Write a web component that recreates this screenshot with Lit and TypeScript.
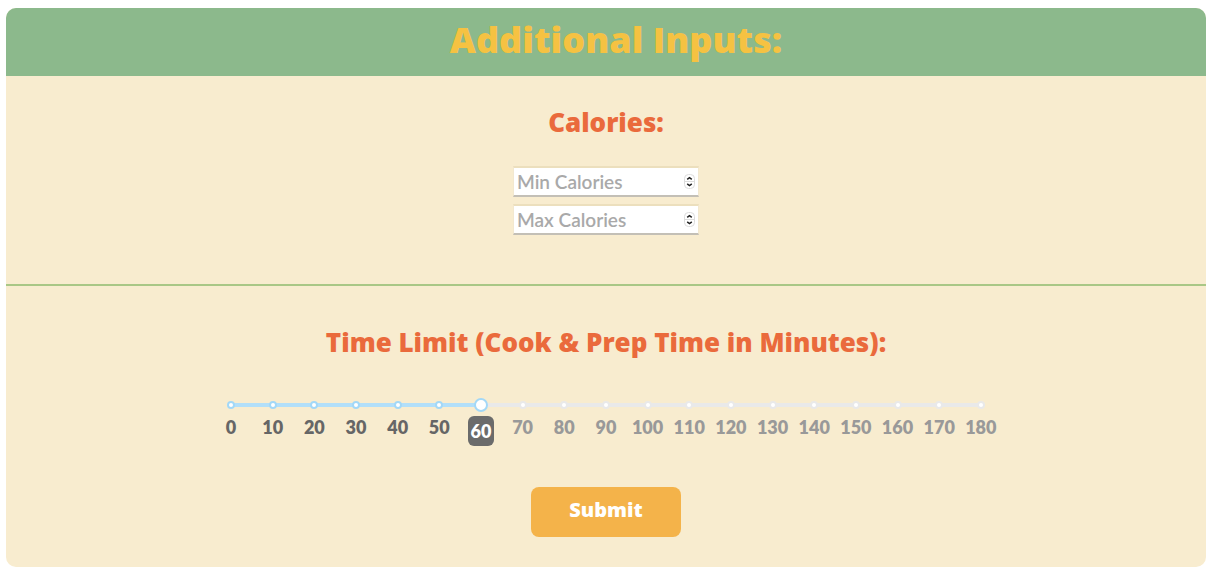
import { LitElement, html, css } from "lit";
import { customElement, property, state } from "lit/decorators.js";
import { classMap } from "lit/directives/class-map.js";

@customElement("calorie-field")
class CalorieField extends LitElement {
  @property() label = "";

  static styles = css`
    :host {
      display: block;
    }
    .field {
      display: grid;
      align-items: center;
    }
    .input,
    .stepper {
      grid-area: 1 / 1;
    }
    .input {
      box-sizing: border-box;
      width: 100%;
      height: 31px;
      margin: 0;
      padding: 0 20px 0 3px;
      background: #fff;
      background-clip: padding-box;
      border: 1px solid #f2e8d0;
      border-top: 2px solid #ecdfbd;
      border-bottom: 2px solid #c3bfb6;
      border-radius: 0;
      outline: none;
      color: #555;
      font: 600 19px/24px Lato, "Liberation Sans", sans-serif;
      appearance: textfield;
    }
    .input::-webkit-inner-spin-button {
      appearance: none;
      margin: 0;
    }
    .input::placeholder {
      color: #a9a9a9;
      opacity: 1;
    }
    .stepper {
      justify-self: end;
      margin-right: 4px;
      pointer-events: none;
    }
  `;

  render() {
    return html`
      <div class="field">
        <input class="input" type="number" min="0" placeholder=${this.label} aria-label=${this.label} />
        <svg class="stepper" width="11" height="15" viewBox="0 0 11 15" fill="none" aria-hidden="true">
          <rect x="0.5" y="0.5" width="10" height="14" rx="4" fill="#fff" stroke="#dcdcdc" />
          <path d="M0.5 7.5H10.5" stroke="#dcdcdc" />
          <path d="M3.2 5.4L5.5 3.6L7.8 5.4M3.2 9.8L5.5 11.6L7.8 9.8" stroke="#222" stroke-width="1.5" />
        </svg>
      </div>
    `;
  }
}

@customElement("time-slider")
class TimeSlider extends LitElement {
  @property({ type: Number }) max = 180;
  @property({ type: Number }) step = 10;
  @state() value = 60;

  static styles = css`
    :host {
      display: block;
    }
    .slider {
      display: grid;
      align-items: center;
      height: 14px;
    }
    .rail,
    .fill,
    .dots,
    .range {
      grid-area: 1 / 1;
    }
    .rail,
    .fill {
      height: 4px;
      border-radius: 4px;
      background: #e9e9e9;
    }
    .rail {
      margin: 0 -4px;
    }
    .fill {
      background: #b2dff9;
    }
    .dots,
    .marks {
      display: flex;
      justify-content: space-between;
      list-style: none;
      margin: 0;
      padding: 0;
    }
    .dots li,
    .marks li {
      display: flex;
      justify-content: center;
      width: 0;
    }
    .dot {
      flex: none;
      box-sizing: border-box;
      width: 8px;
      height: 8px;
      border: 2px solid #e9e9e9;
      border-radius: 50%;
      background: #fff;
    }
    .dot.on {
      border-color: #a3d8f7;
    }
    .range {
      appearance: none;
      background: none;
      height: 14px;
      margin: 0 -7px;
      outline: none;
    }
    .range::-webkit-slider-thumb {
      appearance: none;
      box-sizing: border-box;
      width: 14px;
      height: 14px;
      border: 2px solid #a3d8f7;
      border-radius: 50%;
      background: #fff;
    }
    .marks {
      margin-top: 4px;
      height: 30px;
      color: #999;
      font: 800 18px/22px Lato, "Liberation Sans", sans-serif;
    }
    .mark.on {
      color: #666;
    }
    .mark.current {
      flex: none;
      box-sizing: border-box;
      height: 30px;
      padding: 4px 3px;
      border-radius: 6px;
      background: #6b6b6b;
      color: #fff;
    }
  `;

  render() {
    const values = Array.from({ length: this.max / this.step + 1 }, (_, i) => i * this.step);
    return html`
      <div class="slider">
        <div class="rail"></div>
        <div class="fill" style="width: ${(this.value / this.max) * 100}%"></div>
        <ul class="dots" aria-hidden="true">
          ${values.map((v) => html`<li><span class=${classMap({ dot: true, on: v < this.value })}></span></li>`)}
        </ul>
        <input
          class="range"
          type="range"
          min="0"
          max=${this.max}
          step=${this.step}
          .value=${String(this.value)}
          aria-label="Time limit in minutes"
          @input=${(e: Event) => (this.value = Number((e.target as HTMLInputElement).value))}
        />
      </div>
      <ul class="marks">
        ${values.map(
          (v) =>
            html`<li>
              <span class=${classMap({ mark: true, on: v < this.value, current: v === this.value })}>${v}</span>
            </li>`
        )}
      </ul>
    `;
  }
}

@customElement("app-root")
class AppRoot extends LitElement {
  static styles = css`
    :host {
      display: block;
      padding: 8px 14px 11px 6px;
      background: #fff;
      font-family: "Open Sans", "Liberation Sans", sans-serif;
    }
    .panel {
      border-radius: 10px;
      overflow: hidden;
      background: #f8eccf;
    }
    .title {
      margin: 0;
      padding: 8px 0 12px 20px;
      background: #8cb98c;
      color: #f5c242;
      font-size: 36px;
      font-weight: 800;
      line-height: 48px;
      text-align: center;
    }
    .section {
      display: flex;
      flex-direction: column;
      align-items: center;
    }
    .calories {
      padding: 30px 0 49px;
      border-bottom: 2px solid #a9c786;
    }
    .time {
      padding: 40px 0 30px;
    }
    .heading {
      margin: 0;
      color: #ea6a3c;
      font-size: 26px;
      font-weight: 800;
      line-height: 32px;
      text-align: center;
    }
    .fields {
      display: grid;
      gap: 7px;
      width: 186px;
      margin-top: 28px;
    }
    .slider {
      width: 62.5%;
      margin-top: 40px;
    }
    .submit {
      width: 150px;
      height: 50px;
      margin-top: 41px;
      padding: 0 0 4px;
      border: 0;
      border-radius: 8px;
      background: #f4b34a;
      color: #fff;
      font: 800 20px/28px "Open Sans", "Liberation Sans", sans-serif;
      cursor: pointer;
    }
  `;

  render() {
    return html`
      <form class="panel" @submit=${(e: Event) => e.preventDefault()}>
        <h1 class="title">Additional Inputs:</h1>
        <section class="section calories">
          <h2 class="heading">Calories:</h2>
          <div class="fields">
            <calorie-field label="Min Calories"></calorie-field>
            <calorie-field label="Max Calories"></calorie-field>
          </div>
        </section>
        <section class="section time">
          <h2 class="heading">Time Limit (Cook &amp; Prep Time in Minutes):</h2>
          <time-slider class="slider"></time-slider>
          <button class="submit" type="submit">Submit</button>
        </section>
      </form>
    `;
  }
}
